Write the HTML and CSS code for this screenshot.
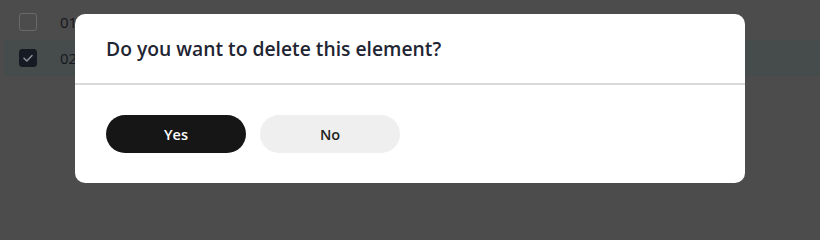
FILE: index.html
```html
<!DOCTYPE html>
<html lang="en">
<head>
<meta charset="utf-8">
<title>Delete element</title>
<link rel="stylesheet" href="styles.css">
</head>
<body>
  <div class="table">
    <div class="row">
      <span class="check"></span>
      <span class="cell">01</span>
    </div>
    <div class="row row-selected">
      <span class="check check-on">
        <svg viewBox="0 0 18 18" width="18" height="18"><path d="M5 9.2 L7.8 12 L13 6.5" fill="none" stroke="#8a8d94" stroke-width="1.6" stroke-linecap="round" stroke-linejoin="round"/></svg>
      </span>
      <span class="cell">02</span>
    </div>
  </div>

  <div class="modal" role="dialog">
    <div class="modal-header">
      <h2 class="modal-title">Do you want to delete this element?</h2>
    </div>
    <div class="modal-footer">
      <button class="btn btn-yes">Yes</button>
      <button class="btn btn-no">No</button>
    </div>
  </div>
</body>
</html>
```

FILE: styles.css
```css
html, body {
  margin: 0;
  padding: 0;
  width: 820px;
  height: 205px;
  overflow: hidden;
  background: #4c4c4c;
  font-family: "Open Sans", "Noto Sans", sans-serif;
}

.table {
  padding: 4px 0 0 4px;
  display: flex;
  flex-direction: column;
}

.row {
  height: 36px;
  display: flex;
  align-items: center;
  padding-left: 15px;
  gap: 23px;
}

.row-selected {
  background: #464c4c;
}

.check {
  width: 18px;
  height: 18px;
  box-sizing: border-box;
  border: 1.5px solid #6a6868;
  border-radius: 3px;
  display: flex;
  align-items: center;
  justify-content: center;
}

.check-on {
  background: #151a23;
  border-color: #151a23;
}

.check-on svg {
  flex: none;
}

.cell {
  font-size: 15px;
  color: #16161e;
}

.modal {
  position: absolute;
  left: 75px;
  top: 14px;
  width: 670px;
  height: 169px;
  background: #fff;
  border-radius: 10px;
  display: flex;
  flex-direction: column;
  overflow: hidden;
}

.modal-header {
  height: 69px;
  display: flex;
  align-items: center;
  padding: 0 31px;
  border-bottom: 2px solid #d9d9d9;
}

.modal-title {
  margin: 0;
  font-size: 19.3px;
  font-weight: 600;
  color: #1f2532;
  line-height: 24px;
}

.modal-footer {
  flex: 1;
  display: flex;
  align-items: center;
  gap: 14px;
  padding: 0 31px;
}

.btn {
  width: 140px;
  height: 38px;
  border: none;
  border-radius: 19px;
  font-family: "Open Sans", "Noto Sans", sans-serif;
  font-size: 14.5px;
  font-weight: 600;
  cursor: pointer;
}

.btn-yes {
  background: #161616;
  color: #fff;
}

.btn-no {
  background: #efefef;
  color: #222;
}
```
